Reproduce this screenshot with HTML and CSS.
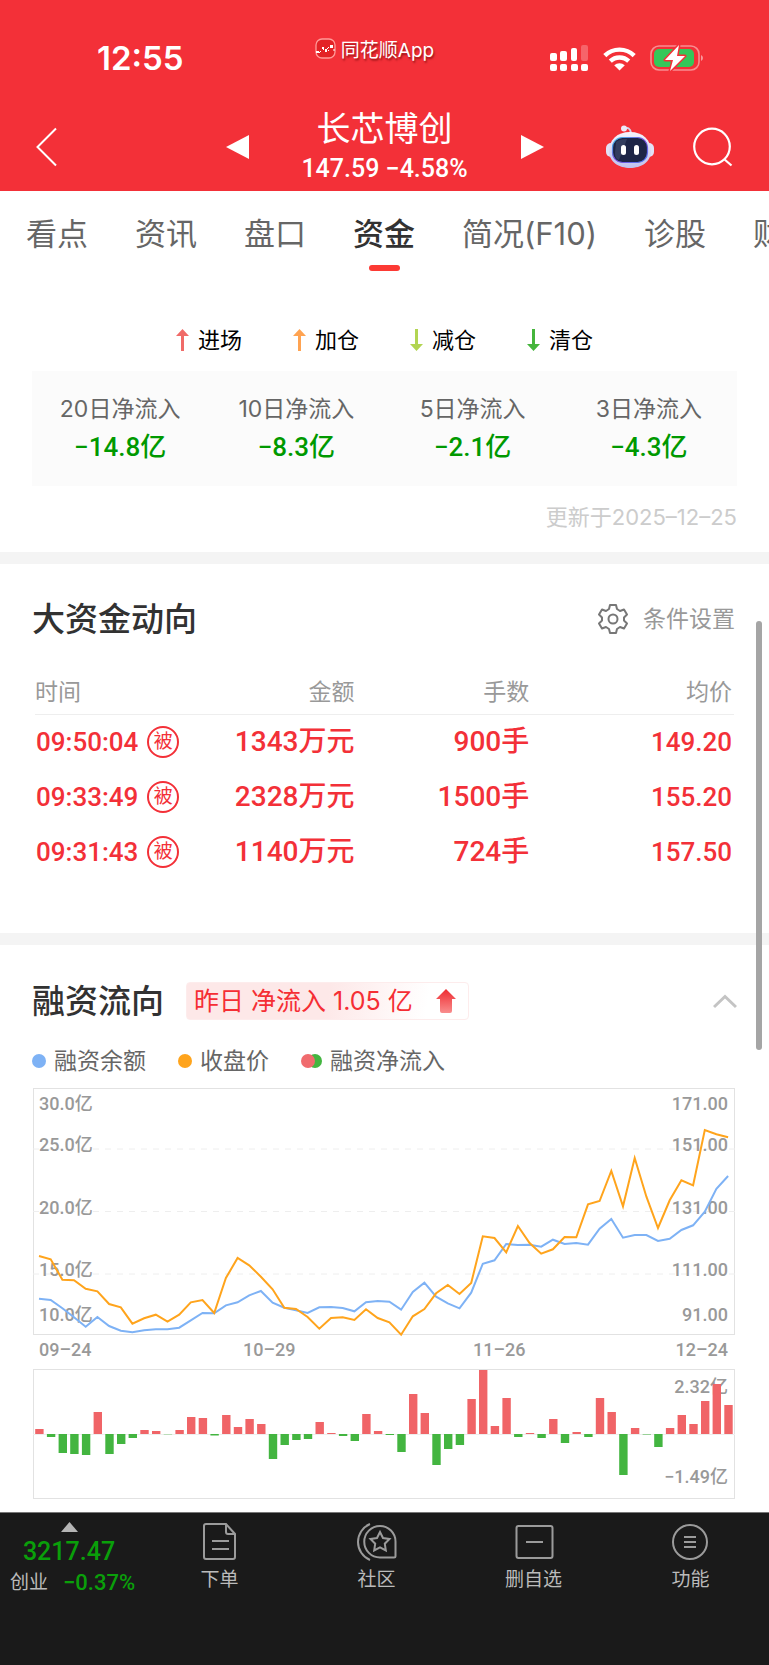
FILE: index.html
```html
<!DOCTYPE html>
<html lang="zh-CN">

<head>
    <meta charset="UTF-8">
    <meta name="viewport" content="width=device-width, initial-scale=1">
    <title>长芯博创 资金</title>
    <link rel="stylesheet" href="styles.css">
</head>

<body>
    <header class="top">
        <div class="status">
            <span class="clock">12:55</span>
            <span class="app-name">
                <svg width="21" height="21" viewBox="0 0 21 21">
                    <rect x="1" y="1" width="19" height="19" rx="6" fill="#e32226" stroke="#ff9a98" stroke-width="1.3" />
                    <path d="M1 13h3v2H1zM7 9h2v2H7zM10 11h2v3h-2zM15 7h3v3h-3z" fill="#fff" />
                    <path d="M4 15l2-2M8 11l1 1M12 11l2-2M13 12l1 1M18 12h2" fill="none" stroke="#fff" />
                </svg>
                同花顺App
            </span>
            <span class="status-icons">
                <svg width="39" height="28" viewBox="0 0 39 28" fill="#fff">
                    <rect x="0" y="9" width="7" height="8" rx="2" />
                    <rect x="10" y="7" width="7" height="10" rx="2" />
                    <rect x="21" y="4" width="6" height="13" rx="2" />
                    <rect x="31" y="1" width="7" height="16" rx="2" opacity=".25" />
                    <rect x="0" y="20" width="7" height="7" rx="2" />
                    <rect x="10" y="20" width="7" height="7" rx="2" />
                    <rect x="21" y="20" width="7" height="7" rx="2" />
                    <rect x="31" y="20" width="7" height="7" rx="2" />
                </svg>
                <svg width="33" height="25" viewBox="0 0 33 25" fill="none" stroke="#fff" stroke-width="4.4">
                    <path d="M1.8 9.6a21 21 0 0 1 29.4 0" />
                    <path d="M7.3 15.2a13.2 13.2 0 0 1 18.4 0" />
                    <path d="M11.2 19.3a7.6 7.6 0 0 1 10.6 0L16.5 24.6z" fill="#fff" stroke="none" />
                </svg>
                <svg width="54" height="28" viewBox="0 0 54 28">
                    <rect x="1" y="2" width="48" height="24" rx="8" fill="none" stroke="#fff" stroke-opacity=".45" stroke-width="1.6" />
                    <rect x="4" y="5" width="40" height="18" rx="5" fill="#34c759" />
                    <path d="M51 11q2 1 2 3t-2 3z" fill="#fff" opacity=".5" />
                    <path d="M29 1L15 16h8l-3 11L35 12h-8z" fill="#fff" stroke="#f33038" stroke-width="3" stroke-linejoin="round" paint-order="stroke" />
                </svg>
            </span>
        </div>
        <div class="titlebar">
            <button class="icon-btn" aria-label="返回">
                <svg width="22" height="40" viewBox="0 0 22 40" fill="none" stroke="#fff" stroke-width="2">
                    <path d="M20 1.500L1.500 20L20 38.500" />
                </svg>
            </button>
            <div class="stock">
                <button class="icon-btn" aria-label="上一只">
                    <svg width="23" height="26" viewBox="0 0 23 26"><path d="M23 1v24L0 13z" fill="#fff" /></svg>
                </button>
                <div class="stock-title">
                    <h1>长芯博创</h1>
                    <p>147.59 −4.58%</p>
                </div>
                <button class="icon-btn" aria-label="下一只">
                    <svg width="23" height="26" viewBox="0 0 23 26"><path d="M0 1v24l23-12z" fill="#fff" /></svg>
                </button>
            </div>
            <div class="actions">
                <button class="icon-btn" aria-label="智能助手">
                    <svg width="48" height="44" viewBox="0 0 48 44">
                        <defs>
                            <linearGradient id="shell" x1="0" y1="0" x2="0" y2="1">
                                <stop offset="0" stop-color="#f4f3fc" />
                                <stop offset="1" stop-color="#bfc1ee" />
                            </linearGradient>
                            <linearGradient id="rim" x1="0" y1="0" x2="1" y2="1">
                                <stop offset="0" stop-color="#3cc4e8" />
                                <stop offset=".5" stop-color="#7b4ce0" />
                                <stop offset="1" stop-color="#4b7bf0" />
                            </linearGradient>
                        </defs>
                        <path d="M18 4q6-3 7 4" fill="none" stroke="#d5d3ec" stroke-width="2" />
                        <circle cx="18" cy="3.500" r="3" fill="#eceafa" />
                        <rect x="0" y="18" width="10" height="14" rx="5" fill="#e2e1f6" />
                        <rect x="38" y="18" width="10" height="14" rx="5" fill="#e2e1f6" />
                        <path d="M24 7C37 7 45 15 45 26S35 43 24 43 3 37 3 26 11 7 24 7z" fill="url(#shell)" />
                        <rect x="6.500" y="12.500" width="35" height="25" rx="10" fill="#1d2547" stroke="url(#rim)" stroke-width="1.200" />
                        <path d="M10 17q3-3 11-3l-8 21q-4-1-4-7z" fill="#4a5578" opacity=".5" />
                        <rect x="15" y="20" width="5" height="10" rx="2.500" fill="#fff" />
                        <rect x="28" y="20" width="5" height="10" rx="2.500" fill="#fff" />
                    </svg>
                </button>
                <button class="icon-btn" aria-label="搜索">
                    <svg width="40" height="40" viewBox="0 0 40 40" fill="none" stroke="#fff" stroke-width="2.200">
                        <circle cx="19" cy="19.500" r="17.800" />
                        <path d="M31 32l7.500 6.500" />
                    </svg>
                </button>
            </div>
        </div>
    </header>

    <nav class="tabs">
        <a href="#">看点</a>
        <a href="#">资讯</a>
        <a href="#">盘口</a>
        <a href="#" class="active">资金</a>
        <a href="#">简况(F10)</a>
        <a href="#">诊股</a>
        <a href="#">财务</a>
    </nav>

    <main>
        <section class="inflow">
            <ul class="position-legend">
                <li><svg width="13" height="22" viewBox="0 0 13 22" fill="#f06b68"><path d="M6.500 0L13 7H8v15H5V7H0z" /></svg>进场</li>
                <li><svg width="13" height="22" viewBox="0 0 13 22" fill="#ffa351"><path d="M6.500 0L13 7H8v15H5V7H0z" /></svg>加仓</li>
                <li><svg width="13" height="22" viewBox="0 0 13 22" fill="#b2d552"><path d="M6.500 22L13 15H8V0H5v15H0z" /></svg>减仓</li>
                <li><svg width="13" height="22" viewBox="0 0 13 22" fill="#45b53c"><path d="M6.500 22L13 15H8V0H5v15H0z" /></svg>清仓</li>
            </ul>
            <dl class="inflow-box">
                <div><dt>20日净流入</dt><dd>−14.8亿</dd></div>
                <div><dt>10日净流入</dt><dd>−8.3亿</dd></div>
                <div><dt>5日净流入</dt><dd>−2.1亿</dd></div>
                <div><dt>3日净流入</dt><dd>−4.3亿</dd></div>
            </dl>
            <p class="updated">更新于2025–12–25</p>
        </section>

        <section class="big-money">
            <div class="section-head">
                <h2>大资金动向</h2>
                <button class="settings">
                    <svg width="32" height="32" viewBox="0 0 32 32" fill="none" stroke="#777" stroke-width="2" stroke-linejoin="round">
                        <path d="M13 2h6l1 4 3 2 4-1.500 3 5-3 3v3l3 3-3 5-4-1.500-3 2-1 4h-6l-1-4-3-2-4 1.500-3-5 3-3v-3l-3-3 3-5 4 1.500 3-2z" />
                        <circle cx="16" cy="16" r="4.500" />
                    </svg>
                    条件设置
                </button>
            </div>
            <table class="orders">
                <thead>
                    <tr><th>时间</th><th>金额</th><th>手数</th><th>均价</th></tr>
                </thead>
                <tbody>
                    <tr><td><div class="time">09:50:04<span class="badge">被</span></div></td><td>1343万元</td><td>900手</td><td>149.20</td></tr>
                    <tr><td><div class="time">09:33:49<span class="badge">被</span></div></td><td>2328万元</td><td>1500手</td><td>155.20</td></tr>
                    <tr><td><div class="time">09:31:43<span class="badge">被</span></div></td><td>1140万元</td><td>724手</td><td>157.50</td></tr>
                </tbody>
            </table>
        </section>

        <section class="margin">
            <div class="section-head">
                <h2>融资流向</h2>
                <span class="tag">
                    昨日 净流入 1.05 亿
                    <svg width="20" height="24" viewBox="0 0 20 24">
                        <defs>
                            <linearGradient id="up" x1="0" y1="0" x2="0" y2="1">
                                <stop offset="0" stop-color="#ee2b30" />
                                <stop offset="1" stop-color="#f98d8d" />
                            </linearGradient>
                        </defs>
                        <path d="M10 0L20 10H16V22q0 2-2 2H6q-2 0-2-2V10H0z" fill="url(#up)" />
                    </svg>
                </span>
                <button class="icon-btn collapse" aria-label="收起">
                    <svg width="24" height="15" viewBox="0 0 24 15" fill="none" stroke="#c4c4c4" stroke-width="3"><path d="M1 13L12 2.500L23 13" /></svg>
                </button>
            </div>
            <ul class="chart-legend">
                <li><i class="dot blue"></i>融资余额</li>
                <li><i class="dot orange"></i>收盘价</li>
                <li><i class="dot red"></i><i class="dot green"></i>融资净流入</li>
            </ul>
            <svg class="chart" viewBox="0 0 705 413">
                <rect class="frame" x="1.500" y="1.500" width="701" height="246" />
                <path class="grid" d="M1 62H703M1 124.500H703M1 187H703" />
                <g class="axis">
                    <text x="7" y="23">30.0亿</text>
                    <text x="7" y="64">25.0亿</text>
                    <text x="7" y="127">20.0亿</text>
                    <text x="7" y="189">15.0亿</text>
                    <text x="7" y="234">10.0亿</text>
                    <text x="7" y="269">09–24</text>
                    <text x="211" y="269">10–29</text>
                    <text x="441" y="269">11–26</text>
                </g>
                <g class="axis right">
                    <text x="696" y="23">171.00</text>
                    <text x="696" y="64">151.00</text>
                    <text x="696" y="127">131.00</text>
                    <text x="696" y="189">111.00</text>
                    <text x="696" y="234">91.00</text>
                    <text x="696" y="269">12–24</text>
                    <text x="696" y="306">2.32亿</text>
                    <text x="696" y="396">−1.49亿</text>
                </g>
                <polyline id="balance" class="line blue" />
                <polyline id="price" class="line orange" />
                <rect class="frame" x="1.500" y="282.500" width="701" height="129" />
                <path class="zero" d="M1 347.500H703" />
                <g id="bars"></g>
            </svg>
        </section>
        <div class="scrollbar"></div>
    </main>

    <footer class="toolbar">
        <a href="#" class="index">
            <svg width="17" height="10" viewBox="0 0 17 10"><path d="M8.500 0L17 10H0z" fill="#b5b5b5" /></svg>
            <strong>3217.47</strong>
            <span>创业<em>−0.37%</em></span>
        </a>
        <a href="#">
            <svg width="40" height="40" viewBox="0 0 40 40">
                <path d="M6 2h20l9 10v23q0 2-2 2H6q-2 0-2-2V4q0-2 2-2zM26 2v8q0 2 2 2h7M12 19h17M12 27h17" />
            </svg>
            下单
        </a>
        <a href="#">
            <svg width="40" height="40" viewBox="0 0 40 40">
                <path d="M13 2a19.500 19.500 0 0 0 0 36M23 4a15.500 15.500 0 0 0 0 31.500H37q1.500 0 1.500-1.500V19.500A15.500 15.500 0 0 0 23 4z" />
                <path d="M23 10l3 6 6.500 1-4.700 4.700 1 6.700-5.800-3-5.800 3 1-6.700-4.700-4.700 6.500-1z" />
            </svg>
            社区
        </a>
        <a href="#">
            <svg width="40" height="40" viewBox="0 0 40 40">
                <rect x="2.500" y="4" width="36" height="32" rx="2" />
                <path d="M12 20h17" />
            </svg>
            删自选
        </a>
        <a href="#">
            <svg width="40" height="40" viewBox="0 0 40 40">
                <circle cx="19" cy="20" r="17" />
                <path d="M13 15h12M13 20h12M13 25h12" />
            </svg>
            功能
        </a>
    </footer>

    <script src="chart.js"></script>
</body>

</html>
```
FILE: styles.css
```css
* {
    box-sizing: border-box;
    margin: 0;
    padding: 0;
}

body {
    background: #fff;
    color: #323232;
    font-family: Inter, "Noto Sans CJK SC", sans-serif;
}

a {
    color: inherit;
    text-decoration: none;
}

ul {
    list-style: none;
}

svg {
    display: block;
    flex: none;
}

button {
    border: 0;
    background: none;
    font-family: inherit;
    cursor: pointer;
}

/* header */
.top {
    background: #f33038;
    color: #fff;
}

.status {
    display: grid;
    grid-template-columns: 1fr auto 1fr;
    align-items: center;
    height: 98px;
    padding: 18px 65px 0 97px;
}

.clock {
    font-size: 33px;
    font-weight: 600;
}

.app-name {
    display: flex;
    align-items: center;
    gap: 5px;
    padding-bottom: 20px;
    margin-right: 52px;
    font-size: 19px;
    text-shadow: 1px 2px 2px rgba(90, 0, 0, 0.6);
}

.status-icons {
    display: flex;
    align-items: center;
    justify-content: flex-end;
    gap: 14px;
}

.titlebar {
    display: grid;
    grid-template-columns: 1fr auto 1fr;
    align-items: center;
    height: 93px;
    padding: 5px 36px 0;
}

.titlebar > .icon-btn {
    justify-self: start;
}

.stock {
    display: flex;
    align-items: center;
    justify-content: space-between;
    width: 318px;
}

.stock-title {
    padding-bottom: 4px;
    text-align: center;
}

.stock-title h1 {
    font-size: 34px;
    font-weight: 400;
    line-height: 48px;
}

.stock-title p {
    font: 500 25px/32px Roboto, sans-serif;
}

.actions {
    display: flex;
    align-items: center;
    justify-content: flex-end;
    gap: 39px;
}

/* tabs */
.tabs {
    display: flex;
    gap: 47px;
    height: 80px;
    padding: 21px 0 0 26px;
    overflow: hidden;
    white-space: nowrap;
    font-size: 31px;
    line-height: 44px;
    color: #666;
}

.tabs .active {
    color: #323232;
    font-weight: 500;
}

.tabs .active::after {
    content: "";
    display: block;
    width: 31px;
    height: 6px;
    margin: 9px auto 0;
    border-radius: 3px;
    background: #fc3a34;
}

main {
    position: relative;
}

section {
    padding: 0 32px;
}

section + section {
    border-top: 12px solid #f4f4f4;
}

/* net inflow */
.inflow {
    padding-top: 54px;
    padding-bottom: 20px;
}

.position-legend {
    display: flex;
    justify-content: center;
    gap: 51px;
    font-size: 22px;
    line-height: 30px;
    color: #000;
}

.position-legend li {
    display: flex;
    align-items: center;
    gap: 9px;
}

.inflow-box {
    display: grid;
    grid-template-columns: repeat(4, 1fr);
    margin-top: 16px;
    padding: 21px 0 19px;
    background: #fbfbfb;
    text-align: center;
}

.inflow-box dt {
    font-size: 23px;
    line-height: 35px;
    color: #666;
}

.inflow-box dd {
    font: 500 26px/40px Roboto, "Noto Sans CJK SC", sans-serif;
    color: #090;
}

.updated {
    margin-top: 16px;
    font-size: 22px;
    line-height: 30px;
    text-align: right;
    color: #ccc;
}

/* section titles */
.section-head {
    display: flex;
    align-items: center;
}

.section-head h2 {
    font-size: 33px;
    font-weight: 500;
    line-height: 38px;
}

.settings {
    display: flex;
    align-items: center;
    gap: 14px;
    margin-left: auto;
    padding-right: 2px;
    font-size: 23px;
    line-height: 32px;
    color: #999;
}

/* big orders */
.big-money {
    padding-top: 36px;
    padding-bottom: 54px;
}

.orders {
    width: calc(100% - 6px);
    margin: 28px auto 0;
    table-layout: fixed;
    border-collapse: collapse;
    text-align: right;
}

.orders th {
    height: 48px;
    padding-right: 2px;
    border-bottom: 1px solid #eee;
    font-size: 23px;
    font-weight: 400;
    color: #999;
}

.orders td {
    height: 55px;
    padding-right: 2px;
    font: 500 28px/40px Roboto, "Noto Sans CJK SC", sans-serif;
    color: #f33038;
}

.orders td:first-child,
.orders td:last-child {
    font-size: 26px;
}

.orders th:first-child {
    width: 22%;
    text-align: left;
}

.orders th:nth-child(2) {
    width: 24%;
}

.orders th:nth-child(3) {
    width: 25%;
}

.time {
    display: flex;
    align-items: center;
    gap: 9px;
    padding-left: 1px;
}

.badge {
    display: grid;
    place-items: center;
    width: 32px;
    height: 32px;
    border: 2px solid #f33038;
    border-radius: 50%;
    font-size: 19px;
    font-weight: 400;
    line-height: 24px;
}

/* margin financing */
.margin {
    padding-top: 37px;
    padding-bottom: 12px;
}

.tag {
    display: flex;
    align-items: center;
    gap: 23px;
    height: 38px;
    margin-left: 22px;
    padding: 0 12px 0 7px;
    border: 1px solid #fdecec;
    border-radius: 4px;
    background: linear-gradient(100deg, #fde8e8 50%, #fff 85%);
    font-size: 25px;
    line-height: 34px;
    white-space: nowrap;
    color: #f52e34;
}

.collapse {
    margin-left: auto;
}

.chart-legend {
    display: flex;
    gap: 32px;
    margin-top: 27px;
    font-size: 23px;
    line-height: 28px;
    color: #666;
}

.chart-legend li {
    display: flex;
    align-items: center;
}

.dot {
    width: 14px;
    height: 14px;
    margin-right: 8px;
    border-radius: 50%;
}

.dot.blue {
    background: #7eb2f5;
}

.dot.orange {
    background: #ffa41c;
}

.dot.red {
    z-index: 1;
    margin-right: -7px;
    background: #f06b6e;
}

.dot.green {
    background: #43b540;
}

.chart {
    width: 100%;
    margin-top: 12px;
}

.frame {
    fill: none;
    stroke: #e2e2e2;
}

.grid {
    fill: none;
    stroke: #eee;
    stroke-dasharray: 6 6;
}

.zero {
    stroke: #eee;
}

.axis {
    font: 500 18px Roboto, "Noto Sans CJK SC", sans-serif;
    fill: #999;
}

.axis.right {
    text-anchor: end;
}

.line {
    fill: none;
    stroke-width: 2;
}

.line.blue {
    stroke: #7eb2f5;
}

.line.orange {
    stroke: #ffa41c;
}

.bar-up {
    fill: #f06467;
}

.bar-down {
    fill: #43b540;
}

.scrollbar {
    position: absolute;
    top: 350px;
    right: 7px;
    width: 6px;
    height: 429px;
    border-radius: 3px;
    background: #a5a5a5;
}

/* bottom toolbar */
.toolbar {
    display: grid;
    grid-template-columns: 141px repeat(4, 1fr);
    height: 153px;
    padding-top: 9px;
    border-top: 1px solid #777;
    background: #1a1a1a;
    color: #bbb;
    font-size: 19px;
    line-height: 28px;
}

.toolbar a {
    display: flex;
    flex-direction: column;
    align-items: center;
    gap: 4px;
}

.toolbar a:not(.index) svg {
    fill: none;
    stroke: #9b9b9b;
    stroke-width: 2;
}

.toolbar .index {
    gap: 0;
    padding-right: 3px;
}

.index strong {
    margin-top: 5px;
    font: 500 25px/30px Roboto, sans-serif;
    color: #0a9f0a;
}

.index span {
    display: flex;
    align-items: center;
    gap: 15px;
    padding-left: 7px;
    line-height: 32px;
}

.index em {
    font: 500 22px/32px Roboto, sans-serif;
    color: #0a9f0a;
}
```
FILE: chart.js
```js
// heights in chart units, one per trading day
var balance = [
    211.7, 213, 221.3, 230.3, 239.7, 230, 239, 243.7, 245.3, 243.3,
    242.3, 242.3, 240.7, 233.3, 226, 226.3, 218.3, 215.3, 208.3, 204,
    215.7, 220.7, 223.3, 226, 220.3, 220, 221, 224.3, 215.3, 214,
    214.7, 222.7, 205, 195.7, 209.7, 216.3, 221.3, 205.7, 176.7, 173.3,
    157, 158, 157.7, 159.7, 152.7, 157, 156, 157.7, 141.7, 132,
    150.7, 148, 148, 154, 151.7, 143, 138.3, 124.7, 101.7, 89
];
var price = [
    169, 172.3, 192.7, 193.3, 201.7, 204.3, 217, 220.3, 236.7, 231.3,
    227.7, 234.7, 227.7, 215.3, 213, 226, 191, 171, 178.3, 189.7,
    202.3, 220.7, 222, 230, 241.7, 231, 230.3, 233, 222.3, 231,
    235.3, 247.7, 229.3, 222, 206.3, 198, 207, 196, 149.3, 151,
    165.3, 139, 156, 166.7, 162.3, 150, 150.3, 117.3, 114, 84,
    119.3, 71, 109.7, 141, 113.3, 93.3, 98.3, 43, 47.3, 50.3
];
var netInflow = [
    5, -3, -19, -20, -21, 22, -20, -10, -4, 4,
    3, -0.3, 4, 17, 16, -1.5, 19, 7, 15, 10,
    -25, -11, -6, -5, 12, 1, -2, -7, 20, 3,
    -1, -18, 40, 21, -31, -15, -11, 35, 64, 8,
    36, -3, 1, -4, 15, -9, 2, -3, 36, 22,
    -41, 6, -0.5, -13, 6, 19, 10, 33, 50, 29
];

var step = 11.68;

function drawLine(id, values) {
    var points = values.map(function(y, i) {
        return (7 + i * step).toFixed(1) + ',' + y;
    });
    document.getElementById(id).setAttribute('points', points.join(' '));
}

drawLine('balance', balance);
drawLine('price', price);

var bars = document.getElementById('bars');
netInflow.forEach(function(value, i) {
    var bar = document.createElementNS('http://www.w3.org/2000/svg', 'rect');
    bar.setAttribute('class', value > 0 ? 'bar-up' : 'bar-down');
    bar.setAttribute('x', (3.2 + i * step).toFixed(1));
    bar.setAttribute('y', value > 0 ? 347 - value : 347);
    bar.setAttribute('width', 8.4);
    bar.setAttribute('height', Math.abs(value));
    bars.appendChild(bar);
});
```
